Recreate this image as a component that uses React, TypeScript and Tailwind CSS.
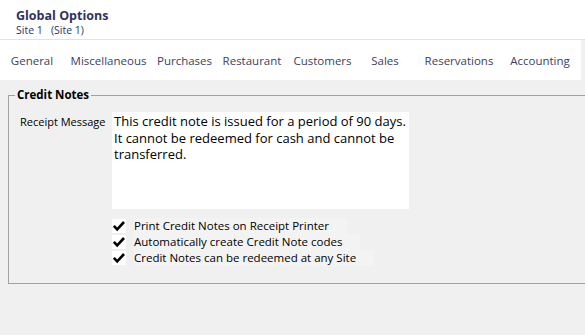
const tabs = [
  { label: "General", w: "w-[64px]" },
  { label: "Miscellaneous", w: "w-[89px]" },
  { label: "Purchases", w: "w-[63px]" },
  { label: "Restaurant", w: "w-[72px]" },
  { label: "Customers", w: "w-[69px]" },
  { label: "Sales", w: "w-[56px]" },
  { label: "Reservations", w: "w-[92px]" },
  { label: "Accounting", w: "w-[70px]" },
];

const options = [
  "Print Credit Notes on Receipt Printer",
  "Automatically create Credit Note codes",
  "Credit Notes can be redeemed at any Site",
];

function Check() {
  return (
    <span className="flex h-[14px] w-[14px] shrink-0 items-center justify-center bg-white">
      <svg width="14" height="14" viewBox="0 0 14 14">
        <path d="M1.8 6.8 L5.2 10.4 L12 3" fill="none" stroke="#000" strokeWidth="2.6" />
      </svg>
    </span>
  );
}

export default function App() {
  return (
    <div
      className="h-[335px] w-[585px] overflow-hidden bg-[#f0f0f0] text-[11.5px] text-black"
      style={{ fontFamily: '"Segoe UI", "Open Sans", sans-serif' }}
    >
      {/* Header */}
      <div className="h-[40px] border-b border-[#e2e2e2] bg-white pl-4 pt-[8px]">
        <div className="text-[12.5px] font-bold leading-[16px] text-[#2f335e]">Global Options</div>
        <div className="text-[10.5px] leading-[13px] text-[#2f335e]">
          Site 1&nbsp;&nbsp;&nbsp;(Site 1)
        </div>
      </div>

      {/* Tabs */}
      <div className="flex h-[40px] w-[581px] items-center bg-white pt-[1px] text-[#3c4163]">
        {tabs.map((t) => (
          <div key={t.label} className={`${t.w} shrink-0 whitespace-nowrap text-center leading-[16px]`}>
            {t.label}
          </div>
        ))}
      </div>

      {/* Group box */}
      <fieldset className="ml-[8px] mt-[7px] h-[197px] w-[600px] border border-[#a0a0a0]">
        <legend className="ml-[6px] px-[2px] text-[11.5px] font-bold leading-[16px]">Credit Notes</legend>
        <div className="mt-[9px] flex">
          <div className="w-[103px] shrink-0 whitespace-nowrap pl-[11px] pt-[2px] text-[11px] leading-[16px]">
            Receipt Message
          </div>
          <div className="h-[97px] w-[297px] bg-white px-[2px] pt-[1px] text-[13px] leading-[16.5px]">
            This credit note is issued for a period of 90 days. It cannot be redeemed for cash and cannot be
            transferred.
          </div>
        </div>
        <div className="ml-[103px] mt-[9px] flex flex-col">
          {options.map((o) => (
            <div key={o} className="flex h-[16px] items-center gap-[8px]">
              <Check />
              <span className="whitespace-nowrap bg-[#f3f3f3] pr-[18px] leading-[16px]">{o}</span>
            </div>
          ))}
        </div>
      </fieldset>
    </div>
  );
}
